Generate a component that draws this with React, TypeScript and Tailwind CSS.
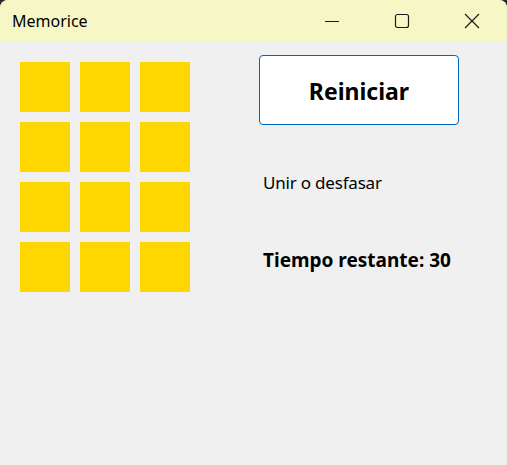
import { useState } from "react";

const tiles = Array.from({ length: 12 }, (_, i) => i);

export default function App() {
  const [time] = useState(30);
  return (
    <div className="w-[507px] h-[465px] bg-[#2b2b2b] font-['Noto_Sans',sans-serif] text-black">
      <div className="flex flex-col h-full rounded-t-[8px] overflow-hidden bg-[#f0f0f0]">
        <div className="flex items-center h-[41px] bg-[#f7f7c6] shrink-0">
          <span className="pl-[12px] text-[16px] leading-none">Memorice</span>
          <div className="ml-auto flex h-full">
            <button className="w-[70px] h-full flex items-center justify-center">
              <svg width="16" height="16" viewBox="0 0 16 16">
                <path d="M1 8.5h14" stroke="#1a1a1a" strokeWidth="1" />
              </svg>
            </button>
            <button className="w-[70px] h-full flex items-center justify-center">
              <svg width="16" height="16" viewBox="0 0 16 16">
                <rect x="1.5" y="1.5" width="13" height="13" rx="2" fill="none" stroke="#1a1a1a" strokeWidth="1.2" />
              </svg>
            </button>
            <button className="w-[70px] h-full flex items-center justify-center">
              <svg width="16" height="16" viewBox="0 0 16 16">
                <path d="M1 1L15 15M15 1L1 15" stroke="#1a1a1a" strokeWidth="1.2" />
              </svg>
            </button>
          </div>
        </div>
        <div className="flex">
          <div className="grid grid-cols-[repeat(3,50px)] gap-[10px] pl-[20px] pt-[21px]">
            {tiles.map((t) => (
              <div key={t} className="w-[50px] h-[50px] bg-[#ffd700]" />
            ))}
          </div>
          <div className="flex flex-col pl-[69px] pt-[14px]">
            <button className="w-[200px] h-[70px] bg-white border border-[#0067c0] rounded-[4px] text-[23px] font-bold pt-[2px]">
              Reiniciar
            </button>
            <p className="pl-[4px] mt-[45px] text-[17px] tracking-[-0.2px]">Unir o desfasar</p>
            <p className="pl-[4px] mt-[50px] text-[19px] font-bold">Tiempo restante: {time}</p>
          </div>
        </div>
      </div>
    </div>
  );
}
